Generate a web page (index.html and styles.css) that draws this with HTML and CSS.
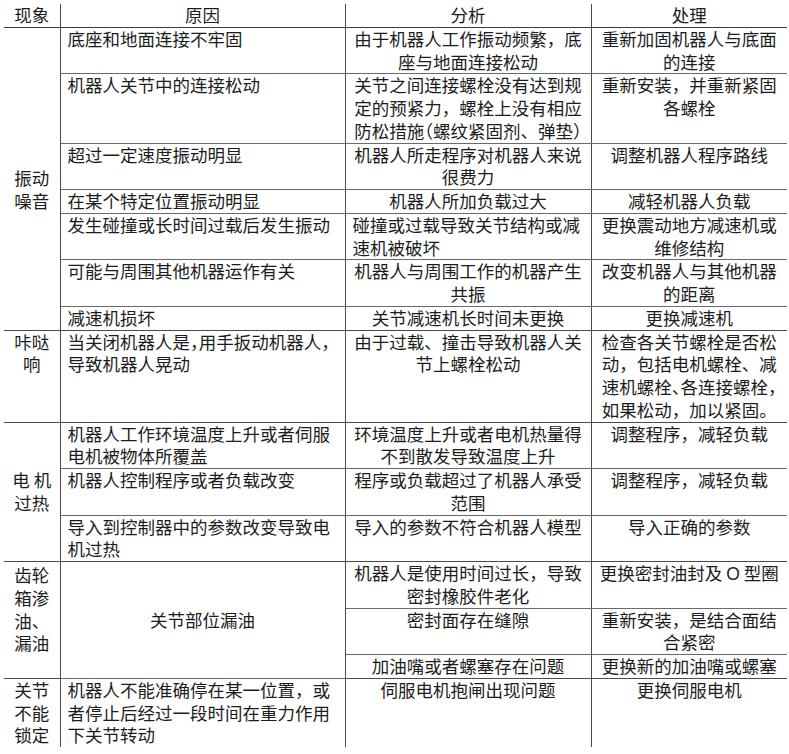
FILE: index.html
```html
<!DOCTYPE html>
<html lang="zh-CN">
<head>
<meta charset="utf-8">
<title>机器人故障现象与处理</title>
<link rel="stylesheet" href="styles.css">
</head>
<body>
<table class="fault-table">
  <colgroup>
    <col class="c-sym">
    <col class="c-cause">
    <col class="c-anal">
    <col class="c-fix">
  </colgroup>
  <thead>
    <tr>
      <th>现象</th>
      <th>原因</th>
      <th>分析</th>
      <th class="last">处理</th>
    </tr>
  </thead>
  <tbody>
    <tr>
      <td class="sym sym-vib" rowspan="7">振动<br>噪音</td>
      <td class="cause">底座和地面连接不牢固</td>
      <td class="anal">由于机器人工作振动频繁，底<br>座与地面连接松动</td>
      <td class="fix">重新加固机器人与底面<br>的连接</td>
    </tr>
    <tr>
      <td class="cause">机器人关节中的连接松动</td>
      <td class="anal">关节之间连接螺栓没有达到规<br>定的预紧力，螺栓上没有相应<br>防松措施<span class="h">（</span>螺纹紧固剂、弹垫<span class="h">）</span></td>
      <td class="fix">重新安装，并重新紧固<br>各螺栓</td>
    </tr>
    <tr>
      <td class="cause">超过一定速度振动明显</td>
      <td class="anal">机器人所走程序对机器人来说<br>很费力</td>
      <td class="fix">调整机器人程序路线</td>
    </tr>
    <tr>
      <td class="cause">在某个特定位置振动明显</td>
      <td class="anal">机器人所加负载过大</td>
      <td class="fix">减轻机器人负载</td>
    </tr>
    <tr>
      <td class="cause">发生碰撞或长时间过载后发生振动</td>
      <td class="anal left">碰撞或过载导致关节结构或减<br>速机被破坏</td>
      <td class="fix">更换震动地方减速机或<br>维修结构</td>
    </tr>
    <tr>
      <td class="cause">可能与周围其他机器运作有关</td>
      <td class="anal">机器人与周围工作的机器产生<br>共振</td>
      <td class="fix">改变机器人与其他机器<br>的距离</td>
    </tr>
    <tr class="group-end">
      <td class="cause">减速机损坏</td>
      <td class="anal">关节减速机长时间未更换</td>
      <td class="fix">更换减速机</td>
    </tr>

    <tr class="group-end">
      <td class="sym">咔哒<br>响</td>
      <td class="cause">当关闭机器人是<span class="h">，</span>用手扳动机器人<span class="h">，</span><br>导致机器人晃动</td>
      <td class="anal">由于过载、撞击导致机器人关<br>节上螺栓松动</td>
      <td class="fix">检查各关节螺栓是否松<br>动，包括电机螺栓、减<br>速机螺栓<span class="h">、</span>各连接螺栓<span class="h">，</span><br>如果松动，加以紧固。</td>
    </tr>

    <tr>
      <td class="sym sym-mid" rowspan="3">电 机<br>过热</td>
      <td class="cause">机器人工作环境温度上升或者伺服<br>电机被物体所覆盖</td>
      <td class="anal">环境温度上升或者电机热量得<br>不到散发导致温度上升</td>
      <td class="fix">调整程序，减轻负载</td>
    </tr>
    <tr>
      <td class="cause">机器人控制程序或者负载改变</td>
      <td class="anal">程序或负载超过了机器人承受<br>范围</td>
      <td class="fix">调整程序，减轻负载</td>
    </tr>
    <tr class="group-end">
      <td class="cause">导入到控制器中的参数改变导致电<br>机过热</td>
      <td class="anal">导入的参数不符合机器人模型</td>
      <td class="fix">导入正确的参数</td>
    </tr>

    <tr>
      <td class="sym sym-gear" rowspan="3">齿轮<br>箱渗<br>油、<br>漏油</td>
      <td class="cause cause-center" rowspan="3">关节部位漏油</td>
      <td class="anal">机器人是使用时间过长，导致<br>密封橡胶件老化</td>
      <td class="fix">更换密封油封及 <span class="latin">O</span> 型圈</td>
    </tr>
    <tr>
      <td class="anal">密封面存在缝隙</td>
      <td class="fix">重新安装，是结合面结<br>合紧密</td>
    </tr>
    <tr class="group-end">
      <td class="anal">加油嘴或者螺塞存在问题</td>
      <td class="fix">更换新的加油嘴或螺塞</td>
    </tr>

    <tr class="final">
      <td class="sym">关节<br>不能<br>锁定</td>
      <td class="cause">机器人不能准确停在某一位置，或<br>者停止后经过一段时间在重力作用<br>下关节转动</td>
      <td class="anal">伺服电机抱闸出现问题</td>
      <td class="fix">更换伺服电机</td>
    </tr>
  </tbody>
</table>
</body>
</html>
```

FILE: styles.css
```css
html, body {
  margin: 0;
  padding: 0;
  background: #ffffff;
}

body {
  font-family: "Noto Sans CJK SC", "Noto Sans", sans-serif;
  font-size: 17.5px;
  line-height: 22.75px;
  color: #1c1c1c;
}

.fault-table {
  margin: 4px 0 0 4px;
  width: 783px;
  table-layout: fixed;
  border-collapse: collapse;
  border-spacing: 0;
}

.c-sym { width: 56px; }
.c-cause { width: 285px; }
.c-anal { width: 246px; }
.c-fix { width: 196px; }

.fault-table th,
.fault-table td {
  padding: 0 7px;
  border: 0;
  border-right: 1px solid #4a4a4a;
  border-bottom: 1px solid #6a6a6a;
  vertical-align: top;
  white-space: nowrap;
  font-weight: 400;
}

.fault-table th {
  text-align: center;
  border-bottom-color: #3c3c3c;
}

.fault-table th.last,
.fault-table td.fix {
  border-right: 0;
}

.fault-table th:first-child,
.fault-table td.sym {
  padding: 0;
  text-align: center;
}

.fault-table .group-end td,
.fault-table td.sym {
  border-bottom-color: #4a4a4a;
}

.fault-table .final td {
  border-bottom: 0;
}

.sym-vib {
  vertical-align: middle !important;
  padding-top: 23px !important;
}

.sym-mid {
  vertical-align: middle !important;
}

.sym-gear {
  padding-top: 2px !important;
}

.cause {
  text-align: left;
}

.cause-center {
  text-align: center !important;
  vertical-align: middle !important;
}

.anal,
.fix {
  text-align: center;
}

.anal.left {
  text-align: left;
}

.h {
  font-feature-settings: "halt" 1;
}

.latin {
  font-family: "Liberation Sans", "Noto Sans", sans-serif;
}
```
